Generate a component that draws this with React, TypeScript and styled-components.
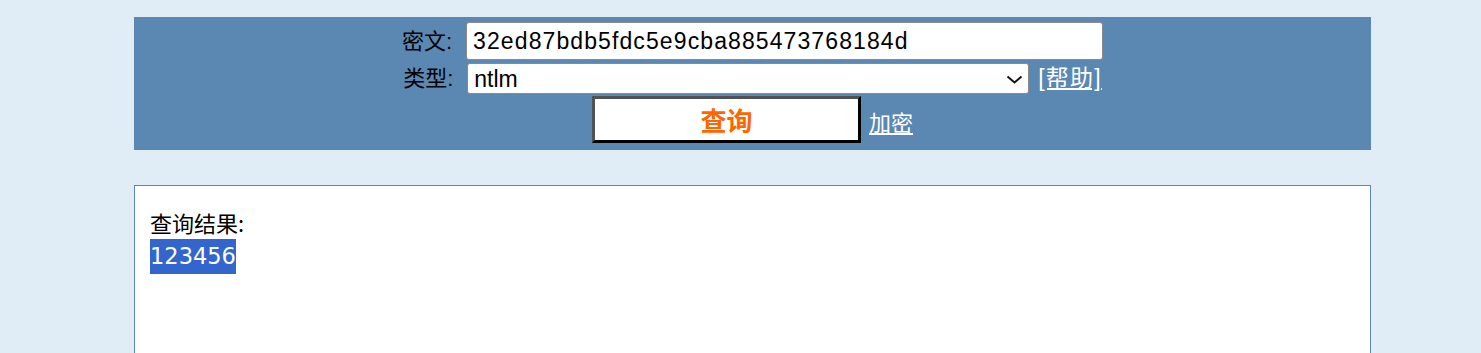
import React, { useState } from "react";
import styled, { createGlobalStyle } from "styled-components";

const GlobalStyle = createGlobalStyle`
  html, body {
    margin: 0;
    padding: 0;
    background: #e1edf6;
  }
  body {
    font-family: "Liberation Sans", Arial, "Noto Sans CJK SC", sans-serif;
  }
`;

const Page = styled.div`
  padding: 17px 110px 0 134px;
`;

const Panel = styled.form`
  background: #5b88b2;
  padding: 5px 0 7px;
  display: flex;
  flex-direction: column;
  align-items: center;
  gap: 2px;
`;

const Row = styled.div<{ $align?: string }>`
  display: flex;
  align-items: ${(p) => p.$align ?? "center"};
  gap: 8px;
`;

const FirstRow = styled(Row)`
  margin-bottom: 1px;
`;

const Label = styled.label`
  font-family: "Liberation Sans", Arial, "Noto Sans CJK SC", sans-serif;
  font-size: 22px;
  line-height: 31px;
  color: #000;
  white-space: nowrap;
  margin-right: 6px;
`;

const TextInput = styled.input`
  width: 637px;
  height: 38px;
  box-sizing: border-box;
  border: 1px solid #8a8a8a;
  border-radius: 3px;
  padding: 0 6px;
  font-family: "Liberation Sans", Arial, sans-serif;
  font-size: 23px;
  letter-spacing: 1.1px;
  color: #000;
  background: #fff;
  outline: none;
`;

const SelectWrap = styled.div`
  position: relative;
  width: 562px;
  height: 31px;
  & svg {
    position: absolute;
    right: 6px;
    top: 12px;
    pointer-events: none;
  }
`;

const Select = styled.select`
  appearance: none;
  width: 100%;
  height: 100%;
  box-sizing: border-box;
  border: 1px solid #8a8a8a;
  border-radius: 3px;
  padding: 0 6px;
  font-family: "Liberation Sans", Arial, sans-serif;
  font-size: 23px;
  color: #000;
  background: #fff;
  outline: none;
`;

const Link = styled.a<{ $size?: number }>`
  color: #fff;
  text-decoration: underline;
  font-family: "Liberation Sans", Arial, "Noto Sans CJK SC", sans-serif;
  font-size: ${(p) => p.$size ?? 22}px;
  line-height: 31px;
  white-space: nowrap;
  cursor: pointer;
`;

const HelpLink = styled(Link)`
  margin-left: 1px;
  letter-spacing: 1.2px;
`;

const SubmitButton = styled.button`
  width: 269px;
  height: 47px;
  box-sizing: border-box;
  background: #fff;
  border-style: solid;
  border-width: 3px;
  border-color: #525252 #000 #000 #525252;
  font-family: "Noto Sans CJK SC", sans-serif;
  font-weight: bold;
  font-size: 26px;
  color: #ff6600;
  cursor: pointer;
  padding: 0;
`;

const Result = styled.div`
  margin-top: 35px;
  background: #fff;
  border: 1px solid #5b88b2;
  border-bottom: none;
  height: 148px;
  padding: 20px 15px 0;
`;

const ResultTitle = styled.div`
  font-family: "Noto Sans CJK SC", sans-serif;
  font-size: 22px;
  line-height: 33px;
  color: #000;
`;

const Answer = styled.span`
  display: inline-block;
  background: #3366cc;
  color: #fff;
  font-family: "DejaVu Sans", Verdana, sans-serif;
  font-size: 22.5px;
  line-height: 35px;
  height: 35px;
`;

const Chevron = () => (
  <svg width="17" height="9" viewBox="0 0 17 9">
    <polyline points="1.5,1.5 8.5,7.5 15.5,1.5" fill="none" stroke="#111" strokeWidth="2" />
  </svg>
);

export default function App() {
  const [hash, setHash] = useState("32ed87bdb5fdc5e9cba885473768184d");
  const [type, setType] = useState("ntlm");

  return (
    <Page>
      <GlobalStyle />
      <Panel onSubmit={(e) => e.preventDefault()}>
        <FirstRow>
          <Label>密文:</Label>
          <TextInput value={hash} onChange={(e) => setHash(e.target.value)} />
        </FirstRow>
        <Row>
          <Label>类型:</Label>
          <SelectWrap>
            <Select value={type} onChange={(e) => setType(e.target.value)}>
              <option value="auto">自动</option>
              <option value="md5">md5</option>
              <option value="sha1">sha1</option>
              <option value="ntlm">ntlm</option>
            </Select>
            <Chevron />
          </SelectWrap>
          <HelpLink $size={23}>[帮助]</HelpLink>
        </Row>
        <Row $align="baseline">
          <SubmitButton type="submit">查询</SubmitButton>
          <Link>加密</Link>
        </Row>
      </Panel>
      <Result>
        <ResultTitle>查询结果:</ResultTitle>
        <Answer>123456</Answer>
      </Result>
    </Page>
  );
}
